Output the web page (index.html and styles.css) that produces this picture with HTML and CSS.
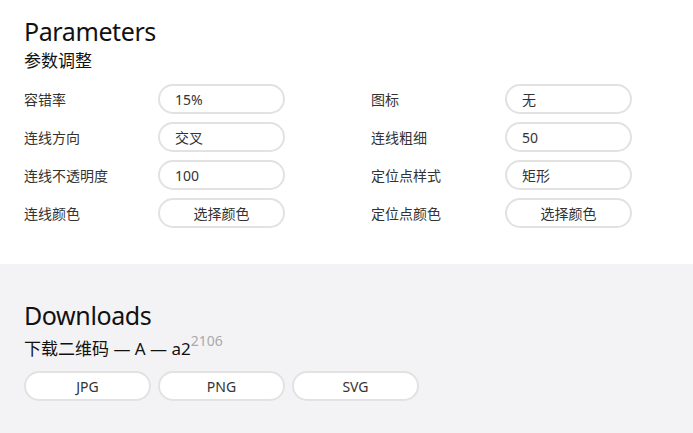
FILE: index.html
```html
<!DOCTYPE html>
<html lang="zh">
<head>
    <meta charset="UTF-8">
    <title>Parameters</title>
    <link rel="stylesheet" href="styles.css">
</head>
<body>
    <section class="panel params">
        <h1>Parameters</h1>
        <h2>参数调整</h2>
        <div class="grid">
            <div class="row"><label>容错率</label><input class="field" value="15%"></div>
            <div class="row"><label>图标</label><input class="field" value="无"></div>
            <div class="row"><label>连线方向</label><input class="field" value="交叉"></div>
            <div class="row"><label>连线粗细</label><input class="field" value="50"></div>
            <div class="row"><label>连线不透明度</label><input class="field" value="100"></div>
            <div class="row"><label>定位点样式</label><input class="field" value="矩形"></div>
            <div class="row"><label>连线颜色</label><button class="field btn">选择颜色</button></div>
            <div class="row"><label>定位点颜色</label><button class="field btn">选择颜色</button></div>
        </div>
    </section>
    <section class="panel downloads">
        <h1>Downloads</h1>
        <h2 class="sub">下载二维码 — A — a2<sup>2106</sup></h2>
        <div class="buttons">
            <button class="field btn">JPG</button>
            <button class="field btn">PNG</button>
            <button class="field btn">SVG</button>
        </div>
    </section>
</body>
</html>
```

FILE: styles.css
```css
body {
    margin: 0;
    font-family: "Noto Sans", "Noto Sans CJK SC", sans-serif;
    color: #111;
    background-color: #fff;
}

.panel {
    box-sizing: border-box;
    padding: 14px 24px 0;
}

.params {
    height: 264px;
}

.downloads {
    background-color: #f3f3f5;
    height: 169px;
    padding-top: 34px;
}

h1 {
    margin: 0;
    font-size: 25px;
    font-weight: 400;
    letter-spacing: -0.4px;
    line-height: 34px;
}

h2 {
    margin: 0;
    font-size: 17px;
    font-weight: 400;
    line-height: 26px;
}

h2.sub {
    margin-top: 4px;
}

h2 sup {
    color: #aaa;
    font-size: 14px;
    vertical-align: 0;
    position: relative;
    top: -9px;
}

.grid {
    display: grid;
    grid-template-columns: 347px 300px;
    row-gap: 8px;
    margin-top: 10px;
}

.row {
    display: flex;
    align-items: center;
}

.row label {
    width: 134px;
    font-size: 14px;
    color: #333;
}

.field {
    box-sizing: border-box;
    width: 127px;
    height: 30px;
    border: 2px solid #e2e2e2;
    border-radius: 15px;
    background-color: #fff;
    padding: 0 15px;
    font-family: inherit;
    font-size: 14px;
    color: #333;
    outline: none;
}

.btn {
    text-align: center;
    cursor: pointer;
}

.buttons {
    display: flex;
    gap: 7px;
    margin-top: 8px;
}
```
